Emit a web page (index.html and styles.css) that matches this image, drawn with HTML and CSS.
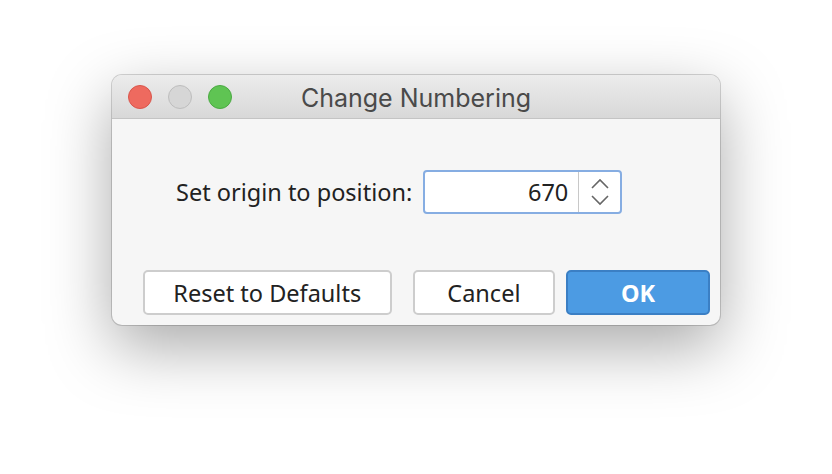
FILE: index.html
```html
<!DOCTYPE html>
<html lang="en">
<head>
    <meta charset="UTF-8">
    <title>Change Numbering</title>
    <link rel="stylesheet" href="styles.css">
</head>
<body>
    <div class="window">
        <div class="titlebar">
            <div class="lights">
                <span class="light close"></span>
                <span class="light min"></span>
                <span class="light zoom"></span>
            </div>
            <div class="title">Change Numbering</div>
        </div>
        <div class="content">
            <div class="field-row">
                <label for="origin">Set origin to position:</label>
                <div class="spin">
                    <input id="origin" type="text" value="670">
                    <div class="stepper">
                        <svg width="22" height="30" viewBox="0 0 22 30">
                            <path d="M3 11 L11 3 L19 11" fill="none" stroke="#666" stroke-width="1.6"/>
                            <path d="M3 19 L11 27 L19 19" fill="none" stroke="#666" stroke-width="1.6"/>
                        </svg>
                    </div>
                </div>
            </div>
            <div class="buttons">
                <button class="btn reset">Reset to Defaults</button>
                <button class="btn cancel">Cancel</button>
                <button class="btn ok">OK</button>
            </div>
        </div>
    </div>
</body>
</html>
```

FILE: styles.css
```css
html, body {
    min-height: 100vh;
}
body {
    margin: 0;
    background: #fff;
    font-family: "Noto Sans", "Open Sans", sans-serif;
    color: #222;
    padding-top: 75px;
    box-sizing: border-box;
}
.window {
    margin-left: 112px;
    width: 608px;
    height: 250px;
    border-radius: 10px;
    background: #f6f6f6;
    box-shadow: 0 0 0 1px rgba(0,0,0,0.16), 0 22px 64px rgba(0,0,0,0.34);
    overflow: hidden;
}
.titlebar {
    height: 43px;
    display: flex;
    align-items: center;
    position: relative;
    background: linear-gradient(#ececec, #d8d8d8);
    border-bottom: 1px solid #c4c4c4;
}
.lights {
    display: flex;
    gap: 16px;
    padding-left: 16px;
    z-index: 1;
}
.light {
    width: 24px;
    height: 24px;
    border-radius: 50%;
    box-sizing: border-box;
}
.light.close { background: #ee6a5f; border: 1px solid #d8564c; }
.light.min { background: #d6d6d6; border: 1px solid #bdbdbd; }
.light.zoom { background: #5fc453; border: 1px solid #4ba943; }
.title {
    position: absolute;
    left: 0;
    right: 0;
    padding-top: 3px;
    text-align: center;
    font-family: Inter, Roboto, sans-serif;
    font-size: 25px;
    color: #4a4a4a;
}
.content {
    padding: 51px 10px 0 31px;
}
.field-row {
    display: flex;
    align-items: center;
    gap: 11px;
    padding-left: 33px;
}
.field-row label {
    font-size: 23.5px;
    color: #222;
}
.spin {
    display: flex;
    width: 199px;
    height: 44px;
    box-sizing: border-box;
    border: 2px solid #86ade2;
    border-radius: 4px;
    background: #fff;
}
.spin input {
    flex: 1;
    min-width: 0;
    border: none;
    outline: none;
    text-align: right;
    font-family: inherit;
    font-size: 23.5px;
    color: #222;
    padding: 0 10px 0 0;
    background: transparent;
}
.stepper {
    width: 41px;
    border-left: 1px solid #c8c8c8;
    display: flex;
    align-items: center;
    justify-content: center;
}
.buttons {
    display: flex;
    margin-top: 56px;
}
.btn {
    height: 45px;
    box-sizing: border-box;
    border: 2px solid #cdcdcd;
    border-radius: 5px;
    background: #fff;
    font-family: inherit;
    font-size: 23.5px;
    color: #222;
    padding: 0;
}
.reset { width: 249px; }
.cancel { width: 143px; margin-left: 21px; }
.ok {
    width: 144px;
    margin-left: 11px;
    background: #4c9be3;
    border-color: #3b7fc4;
    color: #fff;
    font-weight: bold;
}
```
